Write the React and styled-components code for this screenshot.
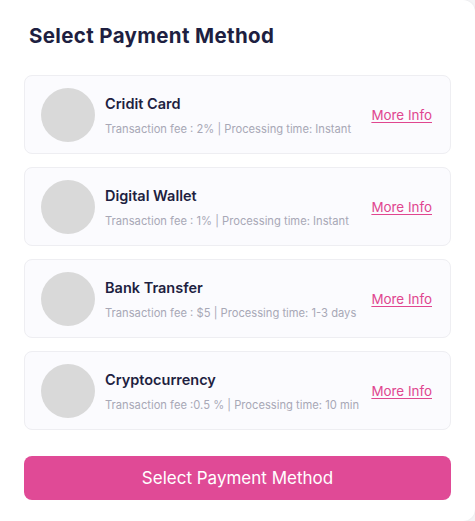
import styled, { createGlobalStyle } from "styled-components";

const GlobalStyle = createGlobalStyle`
  html, body {
    margin: 0;
    padding: 0;
    background: #f4f4f6;
  }
  * {
    box-sizing: border-box;
  }
`;

const Card = styled.div`
  width: 475px;
  height: 521px;
  background: #ffffff;
  border-radius: 0 12px 12px 0;
  box-shadow: 0 0 3px rgba(0, 0, 0, 0.06);
  padding: 22px 24px 0 24px;
  font-family: Inter, "Noto Sans", sans-serif;
  display: flex;
  flex-direction: column;
`;

const Title = styled.h2`
  margin: 0 0 0 5px;
  font-size: 20.5px;
  line-height: 28px;
  font-weight: 700;
  color: #1e1f41;
  letter-spacing: 0.35px;
`;

const List = styled.div`
  display: flex;
  flex-direction: column;
  gap: 13px;
  margin-top: 25px;
`;

const Item = styled.div`
  height: 79px;
  display: flex;
  align-items: center;
  padding: 0 18px 0 16px;
  background: #fbfbfe;
  border: 1px solid #eeeef2;
  border-radius: 8px;
`;

const Logo = styled.div`
  width: 54px;
  height: 54px;
  border-radius: 50%;
  background: #d9d9d9;
  flex-shrink: 0;
`;

const Info = styled.div`
  flex: 1;
  margin-left: 10px;
  display: flex;
  flex-direction: column;
  gap: 9px;
  padding-top: 2px;
`;

const Name = styled.div`
  font-size: 14.5px;
  line-height: 18px;
  font-weight: 600;
  color: #1e1f41;
`;

const Meta = styled.div`
  font-size: 11.2px;
  line-height: 14px;
  color: #a8a8b6;
  white-space: nowrap;
`;

const MoreLink = styled.a`
  font-size: 13.4px;
  color: #e0468f;
  text-decoration: underline;
  text-underline-offset: 2px;
  cursor: pointer;
  white-space: nowrap;
  margin-top: 1px;
`;

const SubmitButton = styled.button`
  margin-top: 26px;
  height: 44px;
  width: 100%;
  border: none;
  border-radius: 8px;
  background: #e04a96;
  color: #fff;
  font-family: inherit;
  font-size: 17px;
  font-weight: 400;
  cursor: pointer;
`;

const methods = [
  { name: "Cridit Card", fee: "2%", time: "Instant", sep: " : " },
  { name: "Digital Wallet", fee: "1%", time: "Instant", sep: " : " },
  { name: "Bank Transfer", fee: "$5", time: "1-3 days", sep: " : " },
  { name: "Cryptocurrency", fee: "0.5 %", time: "10 min", sep: " :" },
];

export default function App() {
  return (
    <>
      <GlobalStyle />
      <Card>
        <Title>Select Payment Method</Title>
        <List>
          {methods.map(m => (
            <Item key={m.name}>
              <Logo />
              <Info>
                <Name>{m.name}</Name>
                <Meta>
                  Transaction fee{m.sep}{m.fee} | Processing time: {m.time}
                </Meta>
              </Info>
              <MoreLink>More Info</MoreLink>
            </Item>
          ))}
        </List>
        <SubmitButton>Select Payment Method</SubmitButton>
      </Card>
    </>
  );
}
